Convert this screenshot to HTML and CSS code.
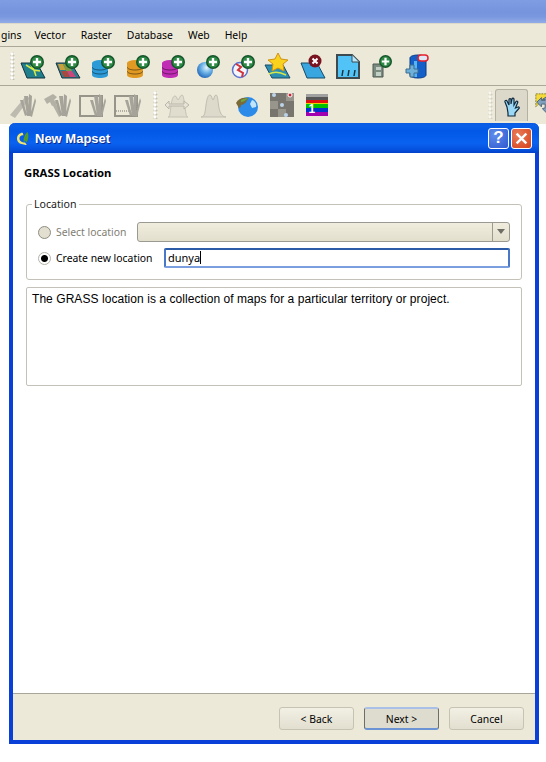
FILE: index.html
```html
<!DOCTYPE html>
<html lang="en">

<head>
    <meta charset="UTF-8">
    <title>New Mapset</title>
    <link rel="stylesheet" href="styles.css">
</head>

<body>
    <svg class="defs" width="0" height="0">
        <defs>
            <radialGradient id="globe" cx="0.6" cy="0.35" r="0.75">
                <stop offset="0" stop-color="#e4f3fc"/>
                <stop offset="0.45" stop-color="#6cb2e6"/>
                <stop offset="1" stop-color="#1458b0"/>
            </radialGradient>
        </defs>
        <symbol id="plus" viewBox="0 0 14 14">
            <circle cx="7" cy="7" r="7" fill="#14542a"/>
            <circle cx="7" cy="7" r="5.5" fill="#2f8a45"/>
            <path d="M7 3v8M3 7h8" stroke="#fff" stroke-width="2.4"/>
        </symbol>
        <symbol id="db" viewBox="0 0 16 18">
            <path d="M0 3v12c0 1.700 3.600 3 8 3s8-1.300 8-3V3z" fill="currentColor"/>
            <ellipse cx="8" cy="3" rx="8" ry="3" fill="currentColor"/>
            <path d="M0 7c0 1.700 3.600 3 8 3s8-1.300 8-3M0 11c0 1.700 3.600 3 8 3s8-1.300 8-3" fill="none" stroke="#000" stroke-opacity=".45"/>
        </symbol>
        <symbol id="dig" viewBox="0 0 28 28">
            <path d="M16 5l3 20 2 0-1-20zM21 3l-1 22 3 0 1-20zM27 7l-5 18 2 1 4-16zM12 9l5 16 2-1-4-15z" fill="#a6a49a"/>
        </symbol>
    </svg>

    <div class="titlebar"></div>

    <nav class="menubar">
        <span class="menu-item cut">gins</span>
        <span class="menu-item">Vector</span>
        <span class="menu-item">Raster</span>
        <span class="menu-item">Database</span>
        <span class="menu-item">Web</span>
        <span class="menu-item">Help</span>
    </nav>

    <div class="toolbar toolbar-one">
        <span class="handle"></span>
        <span class="tool">
            <svg viewBox="0 0 28 28">
                <path d="M2 11h16l8 15H8z" fill="#1f7f8c" stroke="#12343f"/>
                <path d="M7 13l8 5 2 6M12 13l3 5 6 1" fill="none" stroke="#d6e84a" stroke-width="1.500"/>
                <use href="#plus" x="11" y="3" width="14" height="14"/>
            </svg>
        </span>
        <span class="tool">
            <svg viewBox="0 0 28 28">
                <path d="M2 11h15l9 15H8z" fill="#2d7f90" stroke="#20303a"/>
                <path d="M4 12h5l3 6H6z" fill="#c6a13c"/>
                <path d="M9 12h5l4 7h-6z" fill="#7f9a45"/>
                <path d="M7 19h6l3 6h-6z" fill="#a84a3e"/>
                <path d="M13 19h5l4 6h-6z" fill="#c9477c"/>
                <use href="#plus" x="11" y="3" width="14" height="14"/>
            </svg>
        </span>
        <span class="tool">
            <svg viewBox="0 0 28 28">
                <use href="#db" class="db-blue" x="3" y="8" width="16" height="18"/>
                <use href="#plus" x="12" y="3" width="14" height="14"/>
            </svg>
        </span>
        <span class="tool">
            <svg viewBox="0 0 28 28">
                <use href="#db" class="db-orange" x="3" y="8" width="16" height="18"/>
                <use href="#plus" x="12" y="3" width="14" height="14"/>
            </svg>
        </span>
        <span class="tool">
            <svg viewBox="0 0 28 28">
                <use href="#db" class="db-purple" x="3" y="8" width="16" height="18"/>
                <use href="#plus" x="12" y="3" width="14" height="14"/>
            </svg>
        </span>
        <span class="tool">
            <svg viewBox="0 0 28 28">
                <circle cx="11" cy="18" r="8" fill="url(#globe)"/>
                <use href="#plus" x="12" y="3" width="14" height="14"/>
            </svg>
        </span>
        <span class="tool">
            <svg viewBox="0 0 28 28">
                <circle cx="11" cy="18" r="7.500" fill="#f4f6fb" stroke="#5a72d0" stroke-width="1.500"/>
                <path d="M7 12l5 3-3 3 5 3-1 4" fill="none" stroke="#d0343a" stroke-width="2"/>
                <use href="#plus" x="12" y="3" width="14" height="14"/>
            </svg>
        </span>
        <span class="tool">
            <svg viewBox="0 0 28 28">
                <path d="M1 13h18l7 13H8z" fill="#2d8fb0" stroke="#1a4a60"/>
                <path d="M5 22c6-3 11-2 17 1" fill="none" stroke="#d6e84a" stroke-width="1.500"/>
                <path d="M14 1l3 6 7 1-5 4 1 7-6-3-6 3 1-7-5-4 7-1z" fill="#f9d21e" stroke="#d09212"/>
            </svg>
        </span>
        <span class="tool">
            <svg viewBox="0 0 28 28">
                <path d="M2 11h16l8 15H8z" fill="#3aa6e0" stroke="#174a68"/>
                <circle cx="16" cy="9" r="6.500" fill="#7a1420"/>
                <path d="M13.500 6.500l5 5m0-5l-5 5" stroke="#fff" stroke-width="2"/>
            </svg>
        </span>
        <span class="tool">
            <svg viewBox="0 0 28 28">
                <path d="M3 3h15l7 7v16H3z" fill="#52c3f6" stroke="#3d4a50" stroke-width="2"/>
                <path d="M18 3v7h7" fill="#b9e6fa" stroke="#3d4a50"/>
                <path d="M8 24l1-6M14 24l1-6M20 24l1-6" stroke="#1d3340" stroke-width="1.500"/>
            </svg>
        </span>
        <span class="tool">
            <svg viewBox="0 0 28 28">
                <path d="M4 12h10v13H4z" fill="#7d8a80" stroke="#4f5a52"/>
                <path d="M7 15h5v3H7zM7 20h5v4H7z" fill="#c3d0c6"/>
                <use href="#plus" x="10" y="3" width="13" height="13"/>
            </svg>
        </span>
        <span class="tool">
            <svg viewBox="0 0 28 28">
                <path d="M6 6c0-2 4-3 8-3s8 1 8 3v17c0 2-4 3-8 3s-8-1-8-3z" fill="#1560c8" stroke="#0a3a86"/>
                <path d="M10 9h3v16h-3z" fill="#58b4f0"/>
                <rect x="14" y="3" width="10" height="6" rx="3" fill="#dce8f6" stroke="#e8202c" stroke-width="1.500"/>
                <path d="M6 13h4v4h4v4h-4v4H6v-4H2v-4h4z" fill="#6fb0d8" stroke="#3c6c90"/>
            </svg>
        </span>
    </div>

    <div class="toolbar toolbar-two">
        <span class="tool">
            <svg viewBox="0 0 28 28">
                <path d="M2 24L18 5l4 2L7 27z" fill="#bdbbb0"/>
                <use href="#dig"/>
            </svg>
        </span>
        <span class="tool">
            <svg viewBox="0 0 28 28">
                <path d="M1 8l9-5 4 3-3 3 3 3-5 3-2-4-3 2zM9 13l3-2 7 13-3 2z" fill="#b3b1a6"/>
                <use href="#dig"/>
            </svg>
        </span>
        <span class="tool">
            <svg viewBox="0 0 28 28">
                <rect x="2" y="5" width="22" height="20" fill="none" stroke="#97958a" stroke-width="2"/>
                <use href="#dig"/>
            </svg>
        </span>
        <span class="tool">
            <svg viewBox="0 0 28 28">
                <rect x="2" y="5" width="22" height="20" fill="none" stroke="#97958a" stroke-width="2"/>
                <path d="M3 20h18M23 6v14" stroke="#77756c" stroke-dasharray="1 1"/>
                <use href="#dig"/>
            </svg>
        </span>
        <span class="handle handle-mid"></span>
        <span class="tool">
            <svg viewBox="0 0 28 28">
                <path d="M5 26c2 0 2-4 3-11s2-10 4-10 2 4 3 4 2-5 4-5 2 8 3 13 1 9 3 9z" fill="#e0ddce" stroke="#c4c2b4"/>
                <path d="M2 14l4-4v3h15v-3l5 4-5 4v-3H6v3z" fill="#e8e5d8" stroke="#b8b6a8"/>
            </svg>
        </span>
        <span class="tool">
            <svg viewBox="0 0 28 28">
                <path d="M3 26c4 0 4-5 5-12s2-10 4-10 2 5 3 5 1-5 3-5 2 8 3 13 3 9 7 9z" fill="#dddacb" stroke="#bfbdb0"/>
            </svg>
        </span>
        <span class="tool">
            <svg viewBox="0 0 28 28">
                <circle cx="15" cy="16" r="10" fill="#2c8ae8"/>
                <path d="M19 9c3 1 5 4 4 7l-4 1-2-4z" fill="#bfe4fb"/>
                <path d="M3 12c2-4 6-6 12-5-1 4-4 7-7 7 0 2-1 3-2 3z" fill="#7a6a38"/>
                <path d="M8 9c2-1 5-2 7-2-2 2-4 4-7 4z" fill="#6ea63e"/>
            </svg>
        </span>
        <span class="tool">
            <svg viewBox="0 0 28 28">
                <rect x="2" y="2" width="24" height="24" fill="#77756e"/>
                <path d="M2 10h8v8H2zM18 2h8v8h-8zM10 18h8v8h-8z" fill="#98968c"/>
                <circle cx="6" cy="4" r="2" fill="#bcd4ea"/>
                <circle cx="22" cy="4" r="2" fill="#d0202c" stroke="#fff"/>
                <circle cx="14" cy="14" r="2" fill="#bcd4ea"/>
                <circle cx="18" cy="24" r="2" fill="#bcd4ea"/>
            </svg>
        </span>
        <span class="tool">
            <span class="ramp"><span class="ramp-num">1</span></span>
        </span>
        <span class="handle handle-end"></span>
        <span class="tool-active">
            <svg viewBox="0 0 20 22">
                <path d="M5 10L3 5c-.5-1.500 1.500-2 2-1l2 4V2.500c0-1.300 2-1.300 2 0V7l1-5c.3-1.300 2-1 2 .2L12 8l2-3.500c.7-1 2.200-.2 1.700 1L13.500 11l2.500-1c1.200-.3 1.700 1 .7 1.800L13 16v3H6v-3z" fill="#9ad8f5" stroke="#10283c" stroke-width="1.200"/>
            </svg>
        </span>
        <span class="tool-cut">
            <svg viewBox="0 0 28 28">
                <path d="M2 2h14L2 16z" fill="#f4d93a" stroke="#7e7a3c" stroke-dasharray="2 1"/>
                <path d="M14 5l5 5h-3v4h4v-3l5 5-5 5v-3h-4v3l-2 2-5-5 3-1v-4H8v3l-5-5 5-5v3h4V8H9z" fill="#7fa0bc" stroke="#4c6278"/>
            </svg>
        </span>
    </div>

    <section class="dialog">
        <header class="dialog-title">
            <svg class="dialog-icon" viewBox="0 0 16 16">
                <path d="M7 1C3 1 0 4 0 8s3 7 7 7c2 0 3 1 5 1l-2-3c-1 0-2 0-3-.500-2 0-4-2-4-4.500S5 3.500 8 4z" fill="#f2e66c"/>
                <path d="M13 0c-3 2-5 6-5 12 2-1 3-1 4 1 2-4 3-9 1-13z" fill="#4f9a2a"/>
            </svg>
            <span class="dialog-name">New Mapset</span>
            <span class="win-btn win-help">?</span>
            <span class="win-btn win-close">
                <svg viewBox="0 0 12 12"><path d="M1.500 1.500l9 9m0-9l-9 9" stroke="#fff" stroke-width="2.200"/></svg>
            </span>
        </header>

        <div class="dialog-body">
            <h2 class="page-title">GRASS Location</h2>

            <fieldset class="group">
                <legend>Location</legend>
                <div class="row">
                    <span class="radio radio-off"></span>
                    <span class="label label-off">Select location</span>
                    <span class="combo"><span class="combo-arrow"></span></span>
                </div>
                <div class="row row-new">
                    <span class="radio radio-on"></span>
                    <span class="label label-new">Create new location</span>
                    <span class="line-edit">dunya<span class="caret"></span></span>
                </div>
            </fieldset>

            <div class="help-box">The GRASS location is a collection of maps for a particular territory or project.</div>
        </div>

        <footer class="dialog-buttons">
            <button type="button">&lt; Back</button>
            <button type="button" class="default">Next &gt;</button>
            <button type="button">Cancel</button>
        </footer>
    </section>
</body>

</html>
```

FILE: styles.css
```css
html, body {
    margin: 0;
    padding: 0;
}

body {
    position: relative;
    width: 546px;
    height: 762px;
    overflow: hidden;
    background-color: #ffffff;
    font-family: 'Noto Sans', 'DejaVu Sans', sans-serif;
    font-size: 10.4px;
    color: #000000;
}

.defs {
    position: absolute;
}

.db-blue { color: #2c9ad6; }
.db-orange { color: #e09a24; }
.db-purple { color: #c02cb4; }

.titlebar {
    height: 23px;
    background: linear-gradient(#7f9de2 0, #7594dd 12px, #7a98df 17px, #92ace8 23px);
    border-bottom: 1px solid #dcd9c8;
}

.menubar {
    display: flex;
    height: 22px;
    align-items: center;
    background-color: #ece9d8;
    border-bottom: 1px solid #aca899;
}

.menu-item {
    margin-right: 15px;
}

.cut {
    margin-left: 1px;
    margin-right: 13px;
}

.toolbar {
    display: flex;
    align-items: center;
    background-color: #ece9d8;
}

.toolbar-one {
    height: 38px;
    padding-left: 10px;
    border-bottom: 1px solid #aca899;
}

.toolbar-two {
    height: 38px;
    padding-left: 4px;
}

.handle {
    flex: none;
    width: 5px;
    height: 28px;
    background-image: radial-gradient(#ffffff 0, #ffffff 1px, transparent 2px), radial-gradient(#c4c1ae 0, #c4c1ae 1px, transparent 2px);
    background-size: 4px 4px;
    background-position: 0 0, 1px 1px;
}

.tool {
    flex: none;
    display: flex;
    width: 35px;
    height: 28px;
    align-items: center;
    justify-content: center;
}

.tool svg {
    width: 28px;
    height: 28px;
}

.handle-mid {
    margin-left: 9px;
    margin-right: 1px;
}

.handle-end {
    margin-left: 154px;
    margin-right: 2px;
    opacity: 0.6;
}

.tool-active {
    flex: none;
    display: flex;
    width: 31px;
    height: 31px;
    align-items: center;
    justify-content: center;
    background-color: #dcd9cb;
    border: 1px solid #b4b1a3;
    border-bottom: 0;
    border-radius: 3px 3px 0 0;
}

.tool-active svg {
    width: 20px;
    height: 22px;
    margin-top: 4px;
}

.tool-cut {
    flex: none;
    width: 26px;
    height: 26px;
    margin-left: 6px;
}

.ramp {
    display: flex;
    width: 22px;
    height: 22px;
    align-items: flex-end;
    background: linear-gradient(#a0a0a0 0 3px, #555 3px 6px, #e01010 6px 9px, #e8d000 9px 10px, #00c000 10px 14px, #0030d0 14px 18px, #a000b0 18px 22px);
}

.ramp-num {
    padding-left: 3px;
    font-family: 'Liberation Sans', sans-serif;
    font-size: 12px;
    font-weight: bold;
    line-height: 13px;
    color: #ffffff;
}

/* the dialog sits over the main window */
.dialog {
    position: absolute;
    left: 9px;
    top: 123px;
    display: flex;
    flex-direction: column;
    box-sizing: border-box;
    width: 530px;
    height: 621px;
    border: solid #0a3fd8;
    border-width: 0 4px 4px 4px;
    border-radius: 6px 6px 0 0;
    background-color: #ffffff;
}

.dialog-title {
    display: flex;
    flex: none;
    align-items: center;
    height: 30px;
    margin: 0 -4px;
    padding: 0 7px 0 8px;
    border-radius: 6px 6px 0 0;
    background: linear-gradient(#0a5ae0 0, #0a5fe8 3px, #0358e6 8px, #0a62f0 20px, #0450dc 27px, #0340c8 30px);
}

.dialog-icon {
    flex: none;
    width: 13px;
    height: 15px;
}

.dialog-name {
    flex: 1;
    margin-left: 5px;
    font-family: 'Liberation Sans', sans-serif;
    font-size: 13px;
    font-weight: bold;
    color: #ffffff;
    text-shadow: 1px 1px 0 #0a2a90;
}

.win-btn {
    display: flex;
    box-sizing: border-box;
    width: 21px;
    height: 21px;
    align-items: center;
    justify-content: center;
    border: 1px solid #ffffff;
    border-radius: 3px;
}

.win-btn svg {
    width: 13px;
    height: 13px;
}

.win-help {
    margin-right: 2px;
    background: radial-gradient(circle at 30% 30%, #5f8cec, #2f5ad0);
    font-family: 'Liberation Sans', sans-serif;
    font-size: 17px;
    font-weight: bold;
    color: #ffffff;
}

.win-close {
    background: radial-gradient(circle at 30% 30%, #ea7a58, #d4431c);
}

.dialog-body {
    flex: 1;
    padding: 0 13px;
}

.page-title {
    margin: 12px 0 0 -2px;
    font-size: 11.3px;
    font-weight: bold;
    line-height: 15px;
}

.group {
    box-sizing: border-box;
    height: 83px;
    margin: 17px 0 0 0;
    padding: 0 11px;
    border: 1px solid #c4c2b8;
    border-radius: 3px;
}

.group legend {
    margin-left: -6px;
    padding: 0 2px;
    font-size: 10.6px;
    line-height: 15px;
    color: #1a1a1a;
}

.row {
    display: flex;
    align-items: center;
    height: 20px;
    margin-top: 10px;
}

.row-new {
    margin-top: 6px;
}

.radio {
    flex: none;
    box-sizing: border-box;
    width: 13px;
    height: 13px;
    border-radius: 50%;
    border: 1px solid #8e8d82;
}

.radio-off {
    background-color: #e2dfd0;
}

.radio-on {
    border-color: #b4b2a8;
    background: radial-gradient(#000000 0, #000000 3px, #ffffff 4px);
}

.label {
    flex: none;
    margin-left: 5px;
    white-space: nowrap;
}

.label-off {
    width: 81px;
    color: #7f7e74;
}

.label-new {
    width: 97px;
}

.combo {
    display: flex;
    flex: 1;
    justify-content: flex-end;
    box-sizing: border-box;
    height: 20px;
    border: 1px solid #9a9a92;
    border-radius: 3px;
    background: linear-gradient(#f0edde, #e2dfcd);
}

.combo-arrow {
    position: relative;
    width: 16px;
    border-left: 1px solid #9a9a92;
}

.combo-arrow::after {
    content: '';
    position: absolute;
    left: 4px;
    top: 6px;
    border: 4px solid transparent;
    border-top: 5px solid #6f6e66;
    border-bottom: 0;
}

.line-edit {
    flex: 1;
    box-sizing: border-box;
    height: 20px;
    margin-left: 11px;
    padding-left: 2px;
    border: 2px solid #4a78c8;
    border-top-color: #2c5ca8;
    border-bottom-color: #7a9ede;
    border-radius: 2px;
    font-size: 11px;
    line-height: 16px;
    white-space: nowrap;
}

.caret {
    display: inline-block;
    width: 1px;
    height: 13px;
    background-color: #000000;
    vertical-align: -2px;
}

.help-box {
    box-sizing: border-box;
    height: 99px;
    margin-top: 7px;
    padding: 3px 5px;
    border: 1px solid #c4c2b8;
    border-radius: 2px;
    font-family: 'Liberation Sans', sans-serif;
    font-size: 12px;
    letter-spacing: 0.06px;
    line-height: 16px;
}

.dialog-buttons {
    display: flex;
    flex: none;
    justify-content: flex-end;
    gap: 10px;
    box-sizing: border-box;
    height: 47px;
    padding: 13px 11px 0 0;
    border-top: 1px solid #a8a698;
    background-color: #ece9d8;
}

button {
    box-sizing: border-box;
    width: 75px;
    height: 23px;
    padding: 0;
    font-family: 'Noto Sans', 'DejaVu Sans', sans-serif;
    font-size: 10.4px;
    color: #000000;
    background: linear-gradient(#f2f0e4, #e2dfd0);
    border: 1px solid #c6c3b3;
    border-radius: 3px;
}

button.default {
    background: #dedccf;
    border: 1px solid #6e6e68;
    border-top: 2px solid #a9bfe6;
    border-bottom: 2px solid #6c94d4;
}
```
